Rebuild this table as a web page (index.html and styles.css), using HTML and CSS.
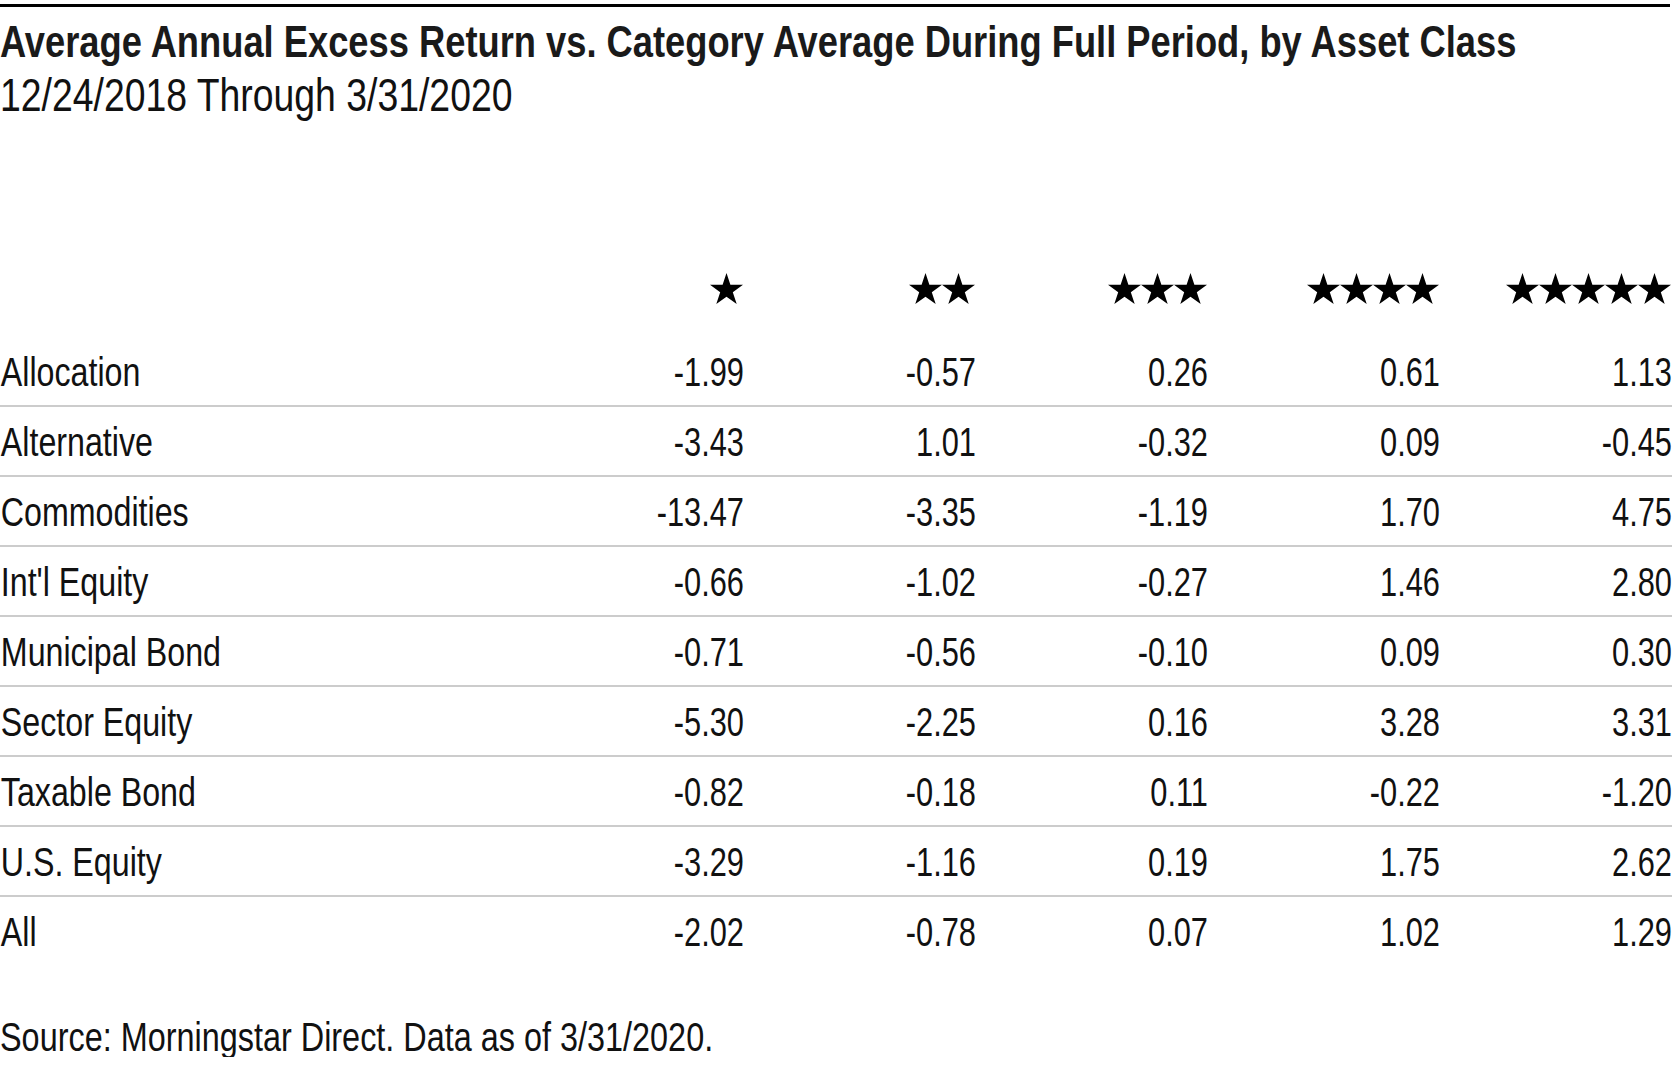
FILE: index.html
```html
<!DOCTYPE html>
<html lang="en">
<head>
<meta charset="utf-8">
<title>Average Annual Excess Return vs. Category Average</title>
<link rel="stylesheet" href="styles.css">
</head>
<body>
<svg class="defs" width="0" height="0" aria-hidden="true">
  <defs>
    <symbol id="star" viewBox="2.4 0 95.2 90.5" preserveAspectRatio="none">
      <polygon points="50,0 61.2,34.5 97.6,34.5 68.2,55.9 79.4,90.5 50,69.1 20.6,90.5 31.8,55.9 2.4,34.5 38.8,34.5"/>
    </symbol>
  </defs>
</svg>
<div class="page">
  <div class="rule"></div>
  <h1 class="title">Average Annual Excess Return vs. Category Average During Full Period, by Asset Class</h1>
  <p class="subtitle">12/24/2018 Through 3/31/2020</p>

  <div class="grid">
    <div class="row head">
      <div class="label"></div>
      <div class="stars" aria-label="1 star">
        <svg class="star"><use href="#star"/></svg>
      </div>
      <div class="stars" aria-label="2 stars">
        <svg class="star"><use href="#star"/></svg>
        <svg class="star"><use href="#star"/></svg>
      </div>
      <div class="stars" aria-label="3 stars">
        <svg class="star"><use href="#star"/></svg>
        <svg class="star"><use href="#star"/></svg>
        <svg class="star"><use href="#star"/></svg>
      </div>
      <div class="stars" aria-label="4 stars">
        <svg class="star"><use href="#star"/></svg>
        <svg class="star"><use href="#star"/></svg>
        <svg class="star"><use href="#star"/></svg>
        <svg class="star"><use href="#star"/></svg>
      </div>
      <div class="stars" aria-label="5 stars">
        <svg class="star"><use href="#star"/></svg>
        <svg class="star"><use href="#star"/></svg>
        <svg class="star"><use href="#star"/></svg>
        <svg class="star"><use href="#star"/></svg>
        <svg class="star"><use href="#star"/></svg>
      </div>
    </div>

    <div class="row"><div class="label">Allocation</div><div class="num">-1.99</div><div class="num">-0.57</div><div class="num">0.26</div><div class="num">0.61</div><div class="num">1.13</div></div>
    <div class="row"><div class="label">Alternative</div><div class="num">-3.43</div><div class="num">1.01</div><div class="num">-0.32</div><div class="num">0.09</div><div class="num">-0.45</div></div>
    <div class="row"><div class="label">Commodities</div><div class="num">-13.47</div><div class="num">-3.35</div><div class="num">-1.19</div><div class="num">1.70</div><div class="num">4.75</div></div>
    <div class="row"><div class="label">Int'l Equity</div><div class="num">-0.66</div><div class="num">-1.02</div><div class="num">-0.27</div><div class="num">1.46</div><div class="num">2.80</div></div>
    <div class="row"><div class="label">Municipal Bond</div><div class="num">-0.71</div><div class="num">-0.56</div><div class="num">-0.10</div><div class="num">0.09</div><div class="num">0.30</div></div>
    <div class="row"><div class="label">Sector Equity</div><div class="num">-5.30</div><div class="num">-2.25</div><div class="num">0.16</div><div class="num">3.28</div><div class="num">3.31</div></div>
    <div class="row"><div class="label">Taxable Bond</div><div class="num">-0.82</div><div class="num">-0.18</div><div class="num">0.11</div><div class="num">-0.22</div><div class="num">-1.20</div></div>
    <div class="row"><div class="label">U.S. Equity</div><div class="num">-3.29</div><div class="num">-1.16</div><div class="num">0.19</div><div class="num">1.75</div><div class="num">2.62</div></div>
    <div class="row last"><div class="label">All</div><div class="num">-2.02</div><div class="num">-0.78</div><div class="num">0.07</div><div class="num">1.02</div><div class="num">1.29</div></div>
  </div>

  <p class="source">Source: Morningstar Direct. Data as of 3/31/2020.</p>
</div>
</body>
</html>
```

FILE: styles.css
```css
html, body {
  margin: 0;
  padding: 0;
  background: #ffffff;
  overflow: hidden;
}

body {
  font-family: "Liberation Sans", Arial, sans-serif;
  color: #111111;
}

.defs {
  position: absolute;
  width: 0;
  height: 0;
  overflow: hidden;
}

.page {
  width: 1672px;
  padding-top: 4px;
}

.rule {
  width: 1670px;
  height: 3px;
  background: #000000;
}

/* Condensed look: Liberation Sans narrowed horizontally */
.title,
.subtitle,
.label,
.source {
  transform-origin: left center;
  white-space: nowrap;
}

.title {
  margin: 11px 0 0 0;
  font-size: 44px;
  line-height: 48px;
  font-weight: 700;
  color: #1a1a1a;
  transform: scaleX(0.825);
}

.subtitle {
  margin: 4px 0 0 0;
  font-size: 47px;
  line-height: 50px;
  font-weight: 400;
  transform: scaleX(0.795);
}

.grid {
  margin-top: 147px;
}

.row {
  display: grid;
  grid-template-columns: 512px repeat(5, 232px);
  height: 70px;
  box-sizing: border-box;
  padding-top: 15px;
  border-bottom: 2px solid #cccccc;
  font-size: 40px;
  line-height: 40px;
}

.row.head {
  padding-top: 6px;
  border-bottom: none;
}

.row.last {
  border-bottom: none;
}

.label {
  padding-left: 1px;
  transform: scaleX(0.805);
}

.num {
  text-align: right;
  white-space: nowrap;
  padding-right: 0;
  transform-origin: right center;
  transform: scaleX(0.77);
}

.stars {
  display: flex;
  justify-content: flex-end;
  align-items: flex-start;
  padding-right: 1px;
}

.star {
  display: block;
  flex: none;
  width: 33px;
  height: 31px;
  fill: #000000;
}

.source {
  margin: 50px 0 0 0;
  font-size: 40px;
  line-height: 40px;
  transform: scaleX(0.81);
}
```
